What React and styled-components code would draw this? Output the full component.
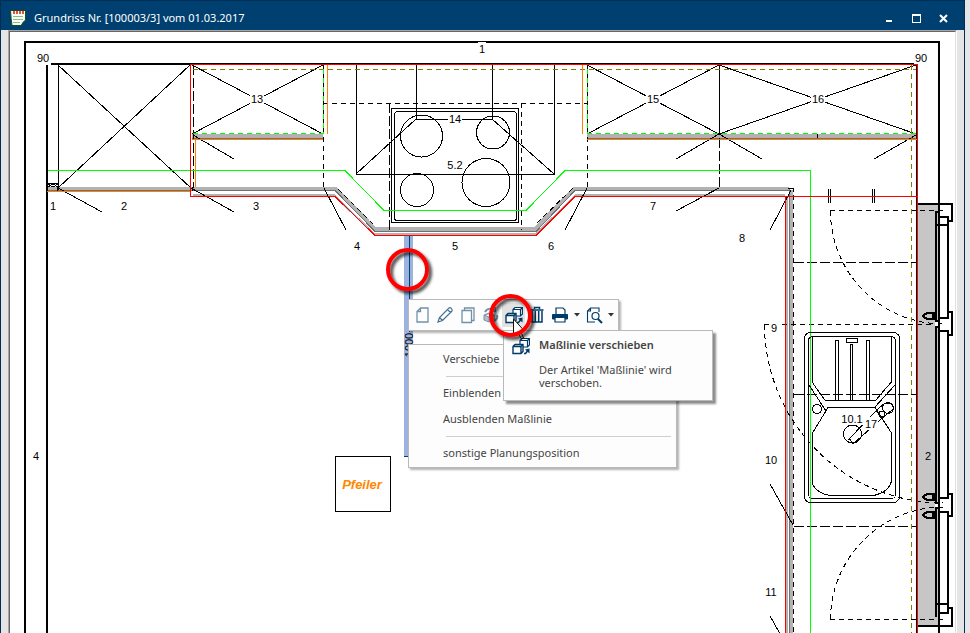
import React from "react";
import styled, { createGlobalStyle, css } from "styled-components";

const navy = "#004070";
const ink = "#003a66";

const GlobalStyle = createGlobalStyle`
  * { box-sizing: border-box; }
  html, body { margin: 0; background: #e6e6e6; }
  body { font-family: "Noto Sans", "Open Sans", sans-serif; font-size: 11px; overflow: hidden; }
  button { font: inherit; border: 0; padding: 0; margin: 0; background: none; color: inherit; }
`;

const Page = styled.div`
  height: 100vh;
  padding-right: 5px;
  background: #e6e6e6;
`;
const Window = styled.main`
  height: 100%;
  display: flex;
  flex-direction: column;
  background: #e5e5e5;
  border: solid #002e55;
  border-width: 1px 1px 0;
`;
const TitleBar = styled.header`
  flex: none;
  height: 29px;
  display: flex;
  align-items: center;
  gap: 8px;
  padding: 5px 11px 0 9px;
  background: ${navy};
  color: #fff;
`;
const Title = styled.h1`
  flex: 1;
  margin: 0;
  font-size: 11px;
  line-height: 16px;
  font-weight: 400;
  white-space: nowrap;
`;
const WindowButtons = styled.div`
  display: flex;
  gap: 7px;
`;
const WindowButton = styled.button`
  width: 20px;
  height: 18px;
  display: grid;
  place-items: center;
`;
const Frame = styled.section`
  flex: 1;
  min-height: 0;
  display: flex;
  margin: 0 7px;
  border: solid;
  border-width: 1px 1px 0;
  border-color: #a8a8a8 #fff #a8a8a8 #a8a8a8;
`;
const Canvas = styled.div`
  position: relative;
  flex: 1;
  overflow: hidden;
  background: #fff;
  border: solid;
  border-width: 1px 1px 0;
  border-color: #666 #e0e0e0 #666 #666;
`;
const Plan = styled.svg`
  display: block;
  shape-rendering: crispEdges;
  fill: none;
  stroke: #000;
  text { fill: #000; stroke: none; font: 11px "Liberation Sans", Arial, sans-serif; text-anchor: middle; }
  .pillar { fill: #ff8800; font-size: 13px; font-weight: 700; font-style: italic; }
  .plate { fill: #fff; stroke: none; }
`;
const Popup = styled.div`
  position: absolute;
  left: 398px;
  top: 267px;
  display: flex;
  flex-direction: column;
  align-items: flex-start;
  gap: 13px;
`;
const panel = css`
  background: #fdfdfd;
  border: 1px solid #b9b9b9;
  box-shadow: 2px 2px 2px rgba(0, 0, 0, 0.3);
`;
const Toolbar = styled.div`
  ${panel}
  height: 32px;
  display: flex;
  align-items: center;
  padding: 0 2px 0 1px;
`;
const Tool = styled.button`
  width: 23px;
  height: 24px;
  display: grid;
  place-items: center;
  background: ${(p) => (p.$active ? "#e2e2e2" : "transparent")};
  opacity: ${(p) => (p.$muted ? 0.55 : 1)};
`;
const Arrow = styled.button`
  width: 11px;
  height: 24px;
  display: grid;
  place-items: center;
`;
const Menu = styled.div`
  ${panel}
  width: 269px;
  display: flex;
  flex-direction: column;
  padding: 1px 5px 1px 34px;
`;
const MenuItem = styled.button`
  height: 26px;
  line-height: 16px;
  text-align: left;
  color: #444;
`;
const Divider = styled.hr`
  align-self: stretch;
  height: 1px;
  margin: 4px 0 3px 3px;
  border: 0;
  background: #cfcfcf;
`;
const Tooltip = styled.aside`
  ${panel}
  position: absolute;
  left: 493px;
  top: 298px;
  width: 210px;
  display: flex;
  gap: 9px;
  padding: 6px 22px 11px 8px;
  box-shadow: 3px 3px 2px rgba(0, 0, 0, 0.45);
  color: #444;
`;
const TipTitle = styled.h2`
  margin: 0 0 10px;
  font-size: 11px;
  line-height: 16px;
  font-weight: 600;
  white-space: nowrap;
`;
const TipText = styled.p`
  margin: 0;
  line-height: 13px;
`;
const Marks = styled.svg`
  position: absolute;
  left: 0;
  top: 0;
  pointer-events: none;
  overflow: visible;
`;
const Glyph = styled.svg`
  flex: none;
  display: block;
`;

function Icon({ children, w = 18, h = 18 }) {
  return (
    <Glyph width={w} height={h} viewBox={`0 0 ${w} ${h}`} fill="none" stroke={ink} aria-hidden="true">
      {children}
    </Glyph>
  );
}

const Move = () => (
  <Icon>
    <path fill="#fff" strokeWidth="1.2" d="M8 3.500 10 1.500h7.500V8l-2 2H8zM8 3.500h7.500V10M15.500 3.500l2-2" />
    <path fill="#fff" strokeWidth="1.4" d="M1 9.500 3 7.500h8V14.500l-2 2H1zM1 9.500h8v7M9 9.500l2-2" />
    <path strokeWidth="1.5" d="M12 16.500h1.500l2.500-3" />
    <path fill={ink} stroke="none" d="m13 12.500 4.500-1v5z" />
  </Icon>
);
const Caret = () => (
  <Icon w={6} h={4}><path fill="#333" stroke="none" d="M0 0h6L3 3.500z" /></Icon>
);

const tools = [
  { label: "Neu", muted: true, art: <path fill="#fff" strokeWidth="1.3" d="M7.500 2H15v14H4V5.500zM7.500 2v3.500H4" /> },
  { label: "Bearbeiten", art: <path stroke="#466f92" strokeWidth="1.2" fill="#fff" d="m2 16 1.500-4.500L13 2c1.500-1 4 1.500 3 3L6.500 14.500zM11.500 3.500l3 3M3.500 11.500l3 3" /> },
  { label: "Kopieren", muted: true, art: <path fill="#fff" strokeWidth="1.3" d="M5.500 4.500V2H15v12.500h-2.500M3 4.500h9.500v12H3z" /> },
  { label: "Tauschen", muted: true, art: <><path fill="#7890a5" d="m2 9 5-2 5 2v5l-5 2-5-2zM2 9l5 2 5-2M7 11v5" /><path strokeWidth="2" d="M3 6c2-4 7-4 9-1M15 9c1 3-1 5-3 6M9 5h4V1" /></> },
];

const labels = [
  [482, 49, "1", 1], [43, 58, "90", 1], [921, 58, "90", 1], [257, 99, "13", 1], [455, 119, "14", 1],
  [653, 99, "15", 1], [818, 99, "16", 1], [455, 165, "5.2"], [53, 206, "1"], [124, 206, "2"],
  [256, 206, "3"], [357, 246, "4"], [455, 246, "5"], [551, 246, "6"], [653, 206, "7"], [742, 238, "8"],
  [774, 328, "9", 1], [771, 460, "10"], [771, 592, "11"], [36, 456, "4"], [928, 456, "2"],
  [852, 419, "10.1", 1], [871, 424, "17", 1],
];

function FloorPlan() {
  return (
    <Plan width="945" height="601" viewBox="10 32 945 601" role="img" aria-label="Grundriss der Küche">
      <rect x="918" y="203" width="21" height="423" fill="#c6c6c6" stroke="none" />
      <g stroke="#b2b2b2">
        <path strokeWidth="4" d="M48 189H336L375 229H535L574 189H789" />
        <path strokeWidth="2" d="M193 195H334L374 234H536L576 195H785M787 196V633" />
        <path strokeWidth="3" d="M791.500 190V633" />
        <path strokeWidth="4" d="M192 136H323M587 136H917" />
      </g>
      <g stroke="#707070">
        <path d="M48 190.500H335L375 231.500H536L575 190.500H789M192 138.500H323M587 138.500H917M789.500 188V633" />
      </g>
      <g strokeWidth="2">
        <path d="M25 633V42H939V633M51 64H914M47 65V633" />
        <path d="M918 203.500H952V221H948M935.500 212V617M935 212H939M939 217H948V318M935 225H948M940 318H948V312H952V335H948V331H940M948 335V498M940 498H948V494H952V516H948V512H940M948 516V613H940M935 604H948M948 608H952V626H918" />
      </g>
      <path d="M58.500 65V190M58 65 191 188M190 65 58 188M192 65 323 134M323 65 192 134M587 65 719 134M719 65 587 134M719 65 916 134M916 65 719 134M719.500 65V134M916.500 65V633" />
      <path d="M193 135 234 159M191 188 234 212M58 188 102 212M719 134 676 159M719 134 762 159M916 135 874 159M719 188 676 211M324 188 346 230M587 188 565 230M791 190 770 230M770 484 793 525M770 616 793 657M817.500 134v4" />
      <path d="M48 183.500H58M48 184l5 3 5-3M48 187l5-3 5 3M57.500 187v4M192.500 187v4M788 188h5v4" />
      <path d="M356.500 65V174.500H554.500V65M416.500 65V119.500H492.500V65M416 119 356 174M492 119 554 174" />
      <rect x="391.500" y="108.500" width="127" height="114" /><rect x="394.500" y="111.500" width="122" height="109" rx="3" />
      <circle cx="421.500" cy="136" r="21" /><circle cx="493" cy="132.500" r="16.500" /><circle cx="417" cy="190" r="16.500" /><circle cx="486" cy="182.500" r="24" />
      <path d="M828.500 189v14M830.500 189v14M872.500 189v14M874.500 189v14" />
      <path strokeDasharray="5 4" d="M323 103.500H587M338 189 374 225M537 223 573 188M323.500 65V190M587.500 65V190M521.500 103V230M793.500 195V633M830 210.500H943M830.500 211A113 113 0 0 0 943 324M764 324.500H943M764.500 325A179 179 0 0 0 943 503M830 619.500H943M830.500 619A113 113 0 0 1 943 507" />
      <path strokeDasharray="10 3" d="M193.500 65V188M389.500 103V230M719.500 138V188M794 262.500H917M794 394.500H917M794 526.500H917" />
      <path stroke="#808000" strokeDasharray="5 4" d="M193 69.500H916M911.500 65V633" />
      <path stroke="#ff8000" d="M47 191.500H190M192 139.500H323M195.500 139V187M327.500 65V134M582.500 65V134M587 139.500H917" />
      <path stroke="#00ff00" strokeDasharray="5 4" d="M193 133.500H323M587 133.500H917M323.500 69V134M587.500 69V134" />
      <path stroke="#00ff00" d="M48 170.500H345L384 210.500H526L565 170.500H810.500V633" />
      <path stroke="#ff0000" d="M190.500 64V196.500H335L375 235.500H536L575 196.500H917M190 64.500H917.500V633M785.500 196V633" />
      <g>
        <rect x="804.500" y="332.500" width="95" height="170" rx="6" /><rect x="808.500" y="336.500" width="87" height="162" rx="4" />
        <path d="M812.500 336V382Q815 387 825 400H876Q886 388 891.500 382V337M835.500 400V340.500H838.500V400M850.500 400V344.500H852.500V400M866.500 400V340.500H869.500V400M846.500 338.500h11v4h-11zM809 385 826 411M895 385 875 407" />
        <path d="M828 407.500H875L891.500 433V480Q891 485 887 489T874 495.500H830Q821 494 816 489T812.500 480V433Z" />
        <circle cx="817" cy="409" r="4.500" /><circle cx="888" cy="408" r="5.500" /><circle cx="882" cy="414" r="3" />
        <circle cx="852.500" cy="434" r="9" /><path d="M848 440 879 408 885 403H891L894 409 888 413 853 444 849 438M876 410 881 418" />
      </g>
      <g fill="#c6c6c6" strokeWidth="2">
        <path d="M933 312V320M933 493V501M933 511V519" strokeWidth="3" />
        <path d="M932 313H928Q924 314 923 316 924 318 928 319H932M932 494H928Q924 495 923 497 924 499 928 500H932M932 512H928Q924 513 923 515 924 517 928 518H932" />
        <path fill="#fff" d="M935 321h4v6h-4M935 503h4v5h-4" />
      </g>
      <rect x="404" y="236" width="9" height="221" fill="#9db3df" stroke="none" />
      <path stroke={navy} d="M409.500 236V332M404 456.500h5" />
      <rect x="335.500" y="456.500" width="55" height="55" /><text className="pillar" x="362" y="489">Pfeiler</text>
      {labels.map(([x, y, t, plate]) => (
        <g key={`${t}-${x}`}>
          {plate && <rect className="plate" x={x - t.length * 3 - 1} y={y - 7} width={t.length * 6 + 2} height="13" />}
          <text x={x} y={y + 4}>{t}</text>
        </g>
      ))}
      <text transform="translate(413 345) rotate(-90)">1000</text>
    </Plan>
  );
}

export default function App() {
  return (
    <>
      <GlobalStyle />
      <Page>
        <Window>
          <TitleBar>
            <Glyph width="16" height="16" aria-hidden="true">
              <path fill="#f7fff4" stroke="#184c24" d="M.5.500h15V10L11 15.500H2Q1 9 .500.500z" />
              <path fill="#184c24" d="M11 15.500q1-4 4.500-5.500z" />
              <path stroke="#e34d45" strokeWidth="3" strokeDasharray="2 1" d="M3 2.500h11" />
              <path stroke="#8cba8d" d="M3 6.500h10M3 9.500h10M3 12.500h7" />
            </Glyph>
            <Title>Grundriss Nr. [100003/3] vom 01.03.2017</Title>
            <WindowButtons>
              <WindowButton aria-label="Minimieren"><Glyph width="10" height="10"><path fill="#fff" d="M2 7h6v2H2z" /></Glyph></WindowButton>
              <WindowButton aria-label="Maximieren"><Glyph width="10" height="10"><path fill="#fff" fillRule="evenodd" d="M1 1h9v9H1zM2 3h7v6H2z" /></Glyph></WindowButton>
              <WindowButton aria-label="Schließen"><Glyph width="10" height="10" stroke="#fff" strokeWidth="2"><path d="m2 2 7 7M9 2 2 9" /></Glyph></WindowButton>
            </WindowButtons>
          </TitleBar>
          <Frame>
            <Canvas>
              <FloorPlan />
              <Popup>
                <Toolbar role="toolbar" aria-label="Maßlinie">
                  {tools.map((t) => (
                    <Tool key={t.label} aria-label={t.label} $muted={t.muted}><Icon>{t.art}</Icon></Tool>
                  ))}
                  <Tool aria-label="Verschieben" $active><Move /></Tool>
                  <Tool aria-label="Löschen">
                    <Icon><path strokeWidth="1.5" d="M2.500 4h13M6.500 3V1.500h5V3M4 5v11h10V5M7.300 5v11M10.700 5v11" /></Icon>
                  </Tool>
                  <Tool aria-label="Drucken">
                    <Icon><path fill="#fff" strokeWidth="1.2" d="M5 8V2h7l2 2v4" /><path fill={ink} d="M1.500 8.500h15V13h-15z" /><path fill="#fff" strokeWidth="1.2" d="M4 11.500h10V16H4z" /></Icon>
                  </Tool>
                  <Arrow aria-label="Druckoptionen"><Caret /></Arrow>
                  <Tool aria-label="Vorschau">
                    <Icon><path strokeWidth="1.1" d="M14 6V2H5.500L2.500 5v11H10M5.500 2v3h-3" /><circle cx="10.500" cy="10" r="3.500" strokeWidth="1.2" /><path strokeWidth="2" d="m13 13 4 4" /></Icon>
                  </Tool>
                  <Arrow aria-label="Vorschauoptionen"><Caret /></Arrow>
                </Toolbar>
                <Menu role="menu">
                  <MenuItem role="menuitem">Verschiebe</MenuItem>
                  <Divider />
                  <MenuItem role="menuitem">Einblenden</MenuItem>
                  <MenuItem role="menuitem">Ausblenden Maßlinie</MenuItem>
                  <Divider />
                  <MenuItem role="menuitem">sonstige Planungsposition</MenuItem>
                </Menu>
              </Popup>
              <Tooltip role="tooltip">
                <Move />
                <div>
                  <TipTitle>Maßlinie verschieben</TipTitle>
                  <TipText>Der Artikel 'Maßlinie' wird verschoben.</TipText>
                </div>
              </Tooltip>
              <Marks width="945" height="601" viewBox="10 32 945 601" fill="none">
                <defs>
                  <filter id="ring" x="-20%" y="-20%" width="150%" height="150%">
                    <feDropShadow dx="3" dy="3" stdDeviation="1.500" floodOpacity="0.7" />
                  </filter>
                </defs>
                <path fill="#fff" stroke="#111" d="M513.500 319v16l4-3 4 7 2-1-3-7h4z" />
                <g stroke="#f00" strokeWidth="4" filter="url(#ring)">
                  <circle cx="407.500" cy="269.500" r="19.500" />
                  <circle cx="510.500" cy="315.500" r="19.500" />
                </g>
              </Marks>
            </Canvas>
          </Frame>
        </Window>
      </Page>
    </>
  );
}
